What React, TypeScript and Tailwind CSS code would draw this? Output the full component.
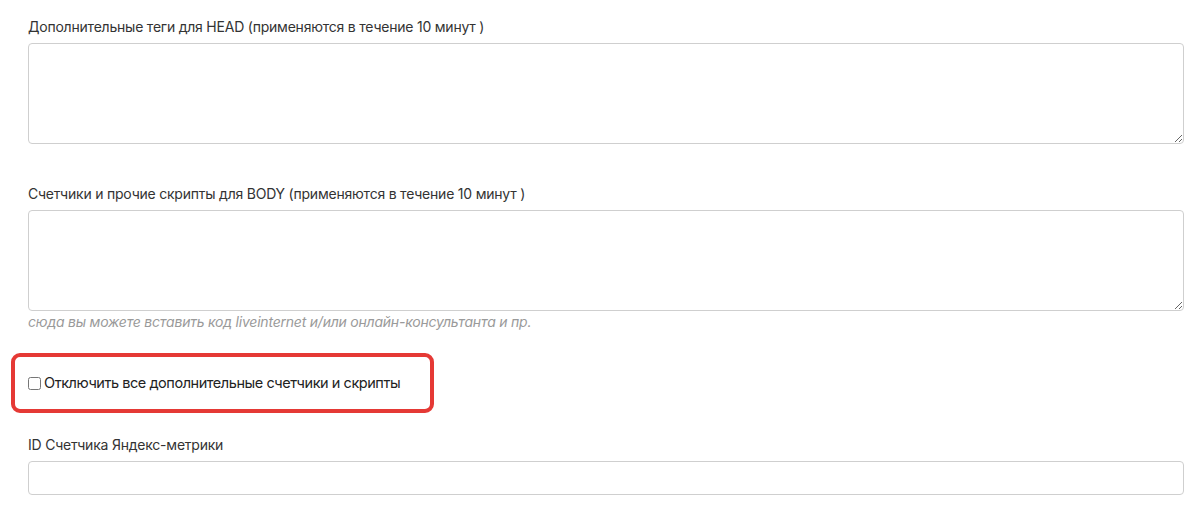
import React from 'react';

const labelCls = 'block text-[14px] leading-5 tracking-[-0.22px] text-[#333] mb-[6px]';
const fieldCls =
  'block w-full border border-[#cfcfcf] rounded-[4px] bg-white outline-none';

export default function App() {
  return (
    <div
      className="w-[1200px] h-[522px] bg-white overflow-hidden pl-[28px] pr-[16px] pt-[17px]"
      style={{ fontFamily: 'Inter, "Noto Sans", sans-serif' }}
    >
      <label className={labelCls}>Дополнительные теги для HEAD (применяются в течение 10 минут )</label>
      <textarea className={`${fieldCls} h-[101px] resize-y`} />

      <label className={`${labelCls} mt-[40px]`}>
        Счетчики и прочие скрипты для BODY (применяются в течение 10 минут )
      </label>
      <textarea className={`${fieldCls} h-[101px] resize-y`} />
      <p className="mt-[1px] text-[14px] leading-5 tracking-[-0.22px] italic text-[#9a9a9a]">
        сюда вы можете вставить код liveinternet и/или онлайн-консультанта и пр.
      </p>

      <div className="mt-[21px] ml-[-17px] w-[423px] h-[60px] border-[4px] border-[#e53935] rounded-[9px] flex items-center pl-[13px]">
        <label className="flex items-center gap-[3px] whitespace-nowrap text-[14.5px] leading-5 tracking-[-0.45px] text-[#222]">
          <input type="checkbox" className="w-[13px] h-[13px] m-0 shrink-0" />
          Отключить все дополнительные счетчики и скрипты
        </label>
      </div>

      <label className={`${labelCls} mt-[22px]`}>ID Счетчика Яндекс-метрики</label>
      <input type="text" className={`${fieldCls} h-[34px]`} />
    </div>
  );
}
